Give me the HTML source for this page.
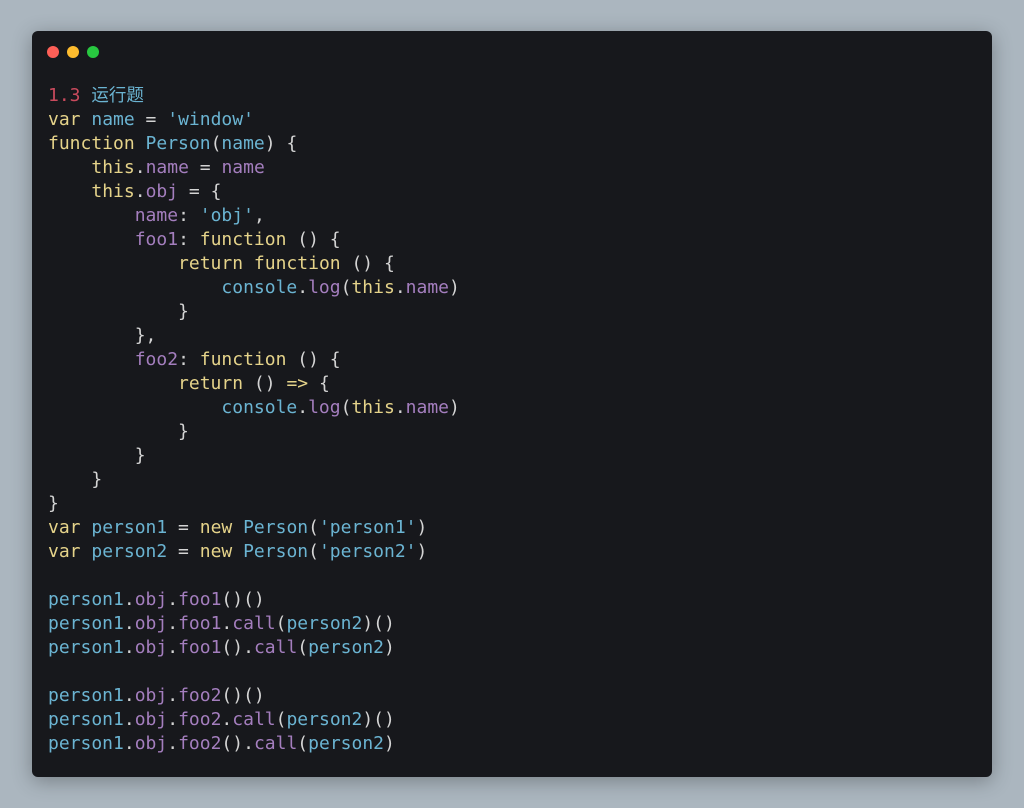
<!DOCTYPE html>
<html><head><meta charset="utf-8"><style>
body{margin:0;width:1024px;height:808px;background:#abb6bf;overflow:hidden}
.card{position:absolute;left:32px;top:31px;width:960px;height:746px;background:#17181c;border-radius:6px;box-shadow:0 4px 20px rgba(0,0,0,.3)}
.dot{position:absolute;top:15px;width:12px;height:12px;border-radius:50%}
pre{position:absolute;left:16px;top:53px;margin:0;font-family:"DejaVu Sans Mono","Liberation Mono","Noto Sans CJK SC",monospace;font-size:18px;line-height:24px;color:#d4d4d4}
.k{color:#e5d38a}.b{color:#6bb4d2}.p{color:#a47ebe}.r{color:#c94a5d}
</style></head><body>
<div class="card">
<div class="dot" style="left:15px;background:#fe5f57"></div>
<div class="dot" style="left:35px;background:#febc2e"></div>
<div class="dot" style="left:55px;background:#28c840"></div>
<pre><span class="r">1.3</span> <span class="b" style="font-family:'Noto Sans CJK SC',sans-serif;font-size:17.5px;line-height:20px">运行题</span>
<span class="k">var</span> <span class="b">name</span> = <span class="b">'window'</span>
<span class="k">function</span> <span class="b">Person</span>(<span class="b">name</span>) {
    <span class="k">this</span>.<span class="p">name</span> = <span class="p">name</span>
    <span class="k">this</span>.<span class="p">obj</span> = {
        <span class="p">name</span>: <span class="b">'obj'</span>,
        <span class="p">foo1</span>: <span class="k">function</span> () {
            <span class="k">return</span> <span class="k">function</span> () {
                <span class="b">console</span>.<span class="p">log</span>(<span class="k">this</span>.<span class="p">name</span>)
            }
        },
        <span class="p">foo2</span>: <span class="k">function</span> () {
            <span class="k">return</span> () <span class="k">=&gt;</span> {
                <span class="b">console</span>.<span class="p">log</span>(<span class="k">this</span>.<span class="p">name</span>)
            }
        }
    }
}
<span class="k">var</span> <span class="b">person1</span> = <span class="k">new</span> <span class="b">Person</span>(<span class="b">'person1'</span>)
<span class="k">var</span> <span class="b">person2</span> = <span class="k">new</span> <span class="b">Person</span>(<span class="b">'person2'</span>)

<span class="b">person1</span>.<span class="p">obj</span>.<span class="p">foo1</span>()()
<span class="b">person1</span>.<span class="p">obj</span>.<span class="p">foo1</span>.<span class="p">call</span>(<span class="b">person2</span>)()
<span class="b">person1</span>.<span class="p">obj</span>.<span class="p">foo1</span>().<span class="p">call</span>(<span class="b">person2</span>)

<span class="b">person1</span>.<span class="p">obj</span>.<span class="p">foo2</span>()()
<span class="b">person1</span>.<span class="p">obj</span>.<span class="p">foo2</span>.<span class="p">call</span>(<span class="b">person2</span>)()
<span class="b">person1</span>.<span class="p">obj</span>.<span class="p">foo2</span>().<span class="p">call</span>(<span class="b">person2</span>)</pre>
</div>
</body></html>
